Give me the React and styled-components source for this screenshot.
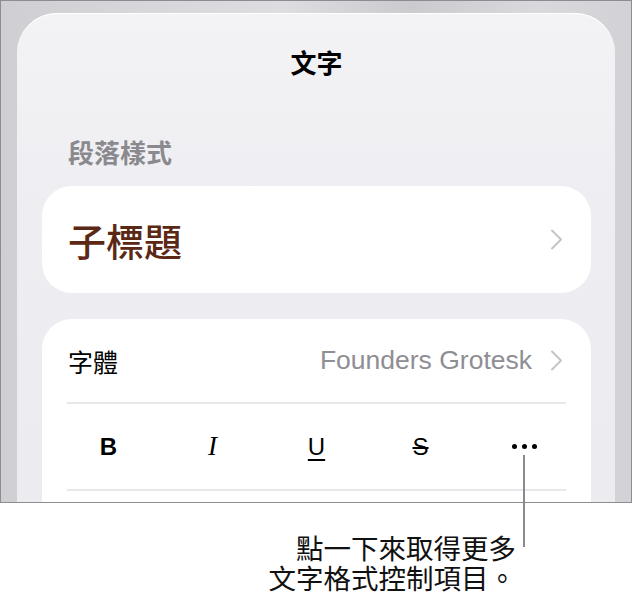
import React from 'react';
import styled, { createGlobalStyle } from 'styled-components';

const GlobalStyle = createGlobalStyle`
    body {
        margin: 0;
        background: #ffffff;
        font-family: "Noto Sans CJK TC", "Liberation Sans", sans-serif;
    }
`

function Chevron() {
    return (
        <svg width="13" height="21" viewBox="0 0 13 21" fill="none">
            <polyline points="2,1.5 11,10.5 2,19.5" stroke="#c4c4c7" strokeWidth="2" strokeLinecap="round" strokeLinejoin="round" />
        </svg>
    );
}

function App() {
    const formats = [
        { key: 'b', label: 'B', kind: 'bold' },
        { key: 'i', label: 'I', kind: 'italic' },
        { key: 'u', label: 'U', kind: 'underline' },
        { key: 's', label: 'S', kind: 'strike' },
    ];

    return (
        <Page>
            <GlobalStyle />
            <Frame>
                <Sheet>
                    <SheetTitle>文字</SheetTitle>
                    <SectionLabel>段落樣式</SectionLabel>
                    <StyleCard>
                        <StyleName>子標題</StyleName>
                        <Chevron />
                    </StyleCard>
                    <FontCard>
                        <FontRow>
                            <RowLabel>字體</RowLabel>
                            <RowValue>
                                Founders Grotesk
                                <Chevron />
                            </RowValue>
                        </FontRow>
                        <Divider />
                        <FormatRow>
                            {formats.map(f => (
                                <FormatButton key={f.key} kind={f.kind}>{f.label}</FormatButton>
                            ))}
                            <FormatButton kind="more">
                                <Dots>
                                    <Dot /><Dot /><Dot />
                                </Dots>
                            </FormatButton>
                        </FormatRow>
                        <Divider />
                    </FontCard>
                </Sheet>
            </Frame>
            <Callout>
                <CalloutLine>點一下來取得更多</CalloutLine>
                <CalloutLine>文字格式控制項目。</CalloutLine>
            </Callout>
            <LeaderLine />
        </Page>
    );
}

export default App;

const Page = styled.div`
    position: relative;
    width: 633px;
    height: 599px;
    overflow: hidden;
`

const Frame = styled.div`
    width: 632px;
    height: 503px;
    box-sizing: border-box;
    border: 1px solid #8d8d8f;
    padding: 12px 16px 0 16px;
    overflow: hidden;
    background: linear-gradient(90deg, #cfcfd3 0%, #d6d6da 20%, #dddde1 45%, #cbcbcf 65%, #d9d9dd 85%, #d2d2d6 100%);
`

const Sheet = styled.div`
    height: 100%;
    box-sizing: border-box;
    padding: 32px 24px 0 25px;
    border-radius: 40px 40px 0 0;
    background: linear-gradient(180deg, #f3f3f6 0%, #eeeef2 40%, #ececf0 100%);
    box-shadow: inset 0 1px 0 #ffffff;
`

const SheetTitle = styled.div`
    text-align: center;
    font-size: 26px;
    line-height: 34px;
    font-weight: 700;
    color: #000;
`

const SectionLabel = styled.div`
    margin-top: 58px;
    padding-left: 26px;
    font-size: 26px;
    line-height: 30px;
    font-weight: 700;
    color: #8a8a8e;
`

const StyleCard = styled.div`
    margin-top: 19px;
    height: 107px;
    box-sizing: border-box;
    background: #ffffff;
    border-radius: 30px;
    padding: 0 28px 0 26px;
    display: flex;
    align-items: center;
    justify-content: space-between;
`

const StyleName = styled.div`
    font-size: 38px;
    line-height: 42px;
    font-weight: 500;
    color: #5a2814;
`

const FontCard = styled.div`
    margin-top: 26px;
    background: #ffffff;
    border-radius: 30px 30px 0 0;
    padding: 0 25px;
    height: 300px;
`

const FontRow = styled.div`
    height: 83px;
    display: flex;
    align-items: center;
    justify-content: space-between;
    padding: 0 3px 0 1px;
`

const RowLabel = styled.div`
    font-size: 25px;
    color: #000;
`

const RowValue = styled.div`
    display: flex;
    align-items: center;
    gap: 18px;
    font-family: "Liberation Sans", "Noto Sans", sans-serif;
    font-size: 26.5px;
    color: #8e8e93;
`

const Divider = styled.div`
    height: 2px;
    background: #e8e8ec;
`

const FormatRow = styled.div`
    height: 85px;
    display: grid;
    grid-template-columns: repeat(5, 104px);
    justify-content: center;
    align-items: center;
`

const FormatButton = styled.div`
    display: flex;
    justify-content: center;
    align-items: center;
    font-size: ${p => (p.kind === 'italic' ? '27px' : '24px')};
    color: #000;
    font-weight: ${p => (p.kind === 'bold' ? 700 : 400)};
    font-style: ${p => (p.kind === 'italic' ? 'italic' : 'normal')};
    font-family: ${p => (p.kind === 'italic' ? '"Liberation Serif", serif' : '"Liberation Sans", sans-serif')};
    text-decoration: ${p => (p.kind === 'underline' ? 'underline' : p.kind === 'strike' ? 'line-through' : 'none')};
    text-decoration-thickness: 2px;
    text-underline-offset: 4px;
`

const Dots = styled.div`
    display: flex;
    gap: 5px;
`

const Dot = styled.span`
    width: 5px;
    height: 5px;
    border-radius: 50%;
    background: #000;
`

const Callout = styled.div`
    margin-top: 29px;
    padding-right: 117px;
    display: flex;
    flex-direction: column;
    align-items: flex-end;
`

const CalloutLine = styled.div`
    height: 30px;
    font-size: 27.5px;
    line-height: 30px;
    color: #111;
    white-space: nowrap;
`

const LeaderLine = styled.div`
    position: absolute;
    left: 523px;
    top: 455px;
    width: 2px;
    height: 92px;
    background: #8a8a8c;
`
